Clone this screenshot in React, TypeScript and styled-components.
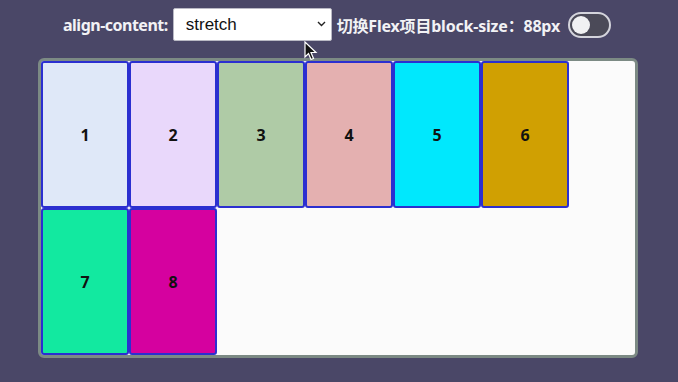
import React, { useState } from "react";
import styled, { createGlobalStyle } from "styled-components";

const Global = createGlobalStyle`
  html, body { margin: 0; padding: 0; background: #4a4767; }
  body { font-family: "Noto Sans", "Noto Sans CJK SC", sans-serif; }
  * { box-sizing: border-box; }
`;

const Page = styled.div`
  width: 678px;
  height: 382px;
  position: relative;
  display: flex;
  flex-direction: column;
  align-items: center;
  padding-top: 8px;
`;

const Toolbar = styled.div`
  display: flex;
  align-items: center;
  height: 33px;
  gap: 5px;
  margin-left: -4px;
`;

const Label = styled.span<{ $tight?: boolean }>`
  color: #f2f2f5;
  font-weight: 700;
  font-size: 16px;
  letter-spacing: ${(p) => (p.$tight ? "-0.5px" : "-0.2px")};
  white-space: nowrap;
`;

const SelectWrap = styled.div`
  position: relative;
  width: 159px;
  height: 33px;
`;

const Select = styled.select`
  appearance: none;
  width: 100%;
  height: 100%;
  background: #fff;
  border: 1px solid #b9b9c4;
  border-radius: 2px;
  font-family: "Liberation Sans", Arial, sans-serif;
  font-size: 17px;
  color: #111;
  padding: 0 0 0 12px;
  outline: none;
`;

const Chevron = styled.svg`
  position: absolute;
  right: 6px;
  top: 13px;
  pointer-events: none;
`;

const Toggle = styled.button<{ $on: boolean }>`
  margin-left: 3px;
  width: 43px;
  height: 26px;
  border-radius: 13px;
  border: 2px solid #d4d4dc;
  background: #4b4a58;
  padding: 0;
  position: relative;
  cursor: pointer;
`;

const Knob = styled.span<{ $on: boolean }>`
  position: absolute;
  top: 2px;
  left: ${(p) => (p.$on ? "19px" : "2px")};
  width: 18px;
  height: 18px;
  border-radius: 50%;
  background: #f1f1f3;
`;

const Board = styled.div`
  margin-top: 17px;
  margin-left: -2px;
  width: 600px;
  height: 300px;
  border: 3px solid #7c8a84;
  border-radius: 6px;
  background: #fbfbfb;
  display: flex;
  flex-wrap: wrap;
  align-content: stretch;
`;

const Item = styled.div<{ $bg: string; $fixed: boolean }>`
  flex: 0 0 88px;
  ${(p) => (p.$fixed ? "height: 88px;" : "")}
  background: ${(p) => p.$bg};
  border: 2px solid #2b2fd0;
  border-radius: 3px;
  display: flex;
  align-items: center;
  justify-content: center;
  font-weight: 700;
  font-size: 16px;
  color: #111;
`;

const Cursor = styled.svg`
  position: absolute;
  left: 304px;
  top: 41px;
`;

const colors = ["#dfe8f8", "#e9d8fb", "#afcba6", "#e4b0b0", "#00e8fd", "#d0a002", "#12e9a0", "#d5019f"];

export default function App() {
  const [on, setOn] = useState(false);
  const [val, setVal] = useState("stretch");
  return (
    <Page>
      <Global />
      <Toolbar>
        <Label $tight>align-content:</Label>
        <SelectWrap>
          <Select value={val} onChange={(e) => setVal(e.target.value)}>
            <option>stretch</option>
            <option>flex-start</option>
            <option>center</option>
            <option>flex-end</option>
            <option>space-between</option>
            <option>space-around</option>
          </Select>
          <Chevron width="9" height="6" viewBox="0 0 9 6">
            <path d="M1 1 L4.5 4.5 L8 1" stroke="#222" strokeWidth="1.4" fill="none" />
          </Chevron>
        </SelectWrap>
        <Label>切换Flex项目block-size：88px</Label>
        <Toggle $on={on} onClick={() => setOn(!on)}>
          <Knob $on={on} />
        </Toggle>
      </Toolbar>
      <Board style={{ alignContent: val }}>
        {colors.map((c, i) => (
          <Item key={i} $bg={c} $fixed={on}>
            {i + 1}
          </Item>
        ))}
      </Board>
      <Cursor width="14" height="20" viewBox="0 0 14 20">
        <path d="M1 1 L1 16 L4.5 12.5 L7 18.5 L9.5 17.5 L7 11.5 L12 11.5 Z" fill="#111" stroke="#fff" strokeWidth="1.2" />
      </Cursor>
    </Page>
  );
}
